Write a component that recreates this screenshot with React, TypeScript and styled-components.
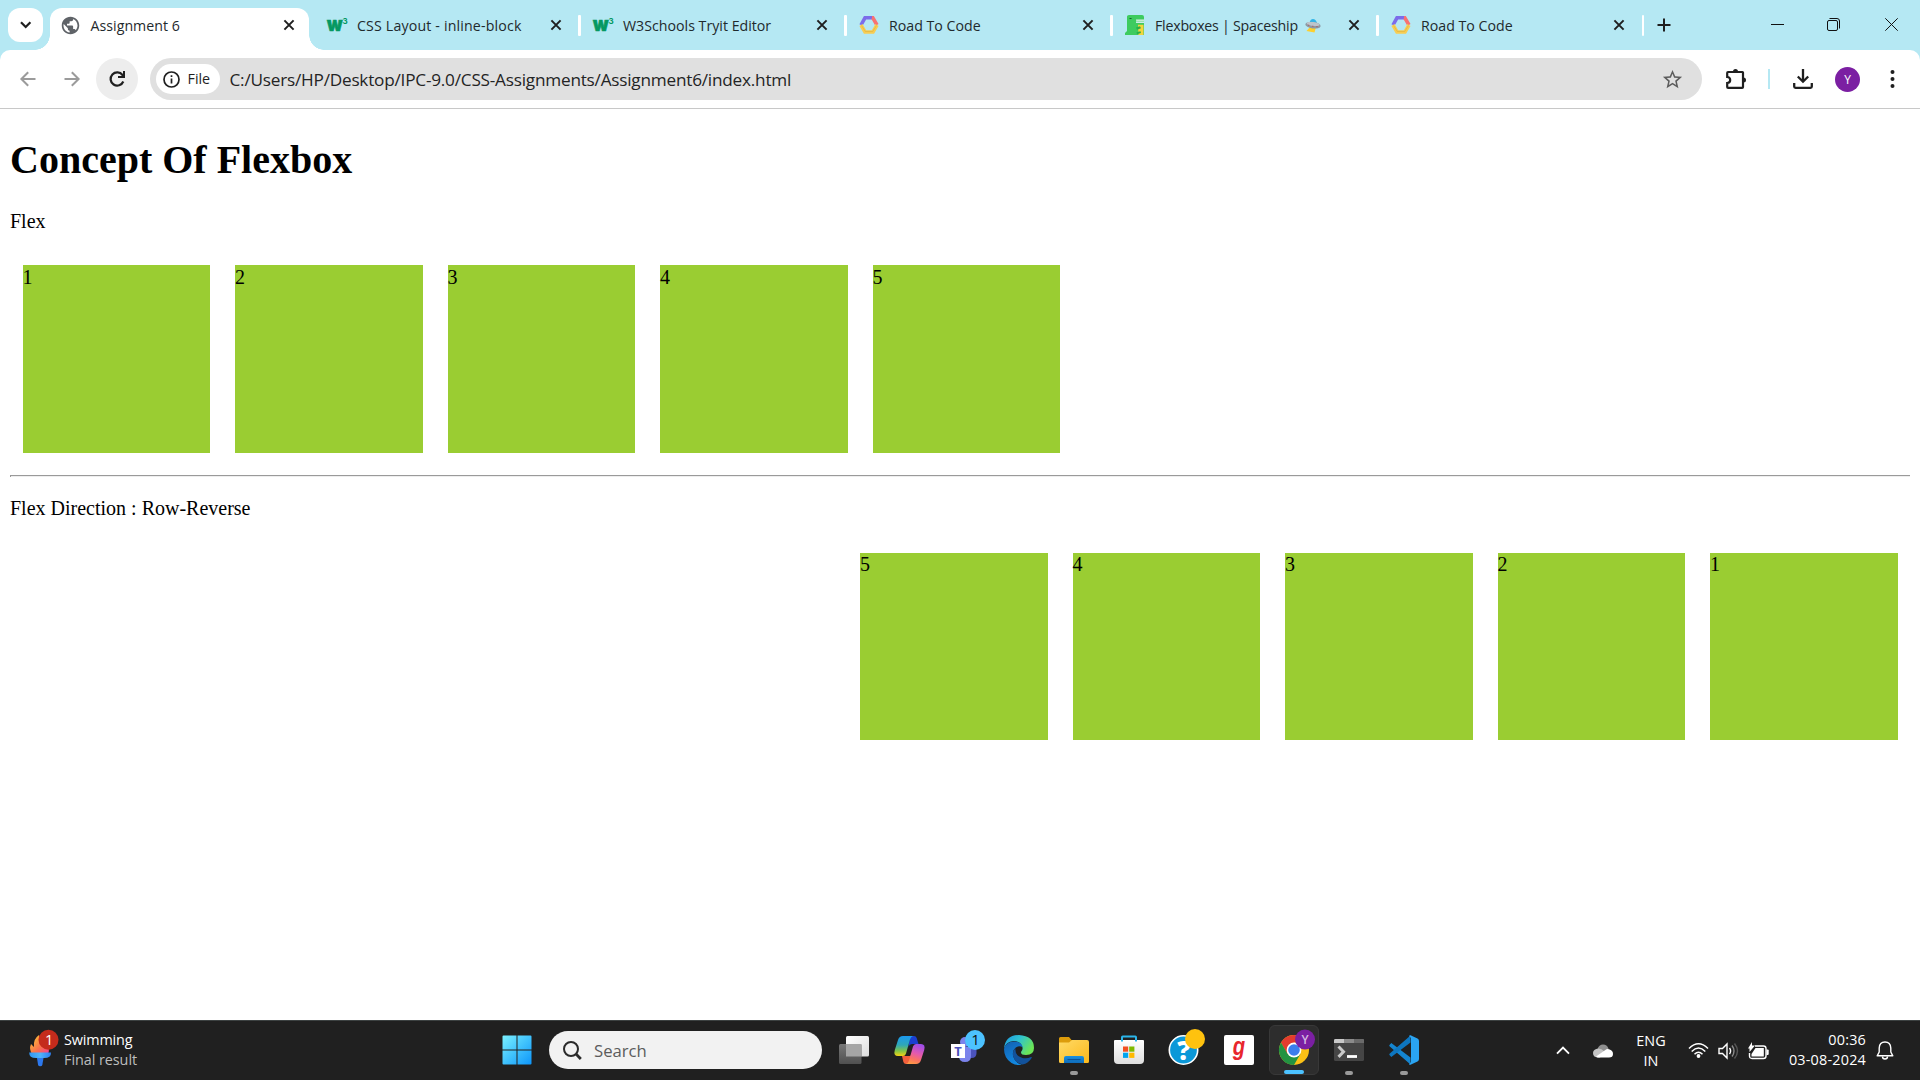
import React from "react";
import styled, { createGlobalStyle, css } from "styled-components";
import { MdPublic, MdStarBorder } from "react-icons/md";

const ui = `"Open Sans", "Noto Sans", sans-serif`;

const Global = createGlobalStyle`
  html, body { margin: 0; padding: 0; background: #fff; }
  * { box-sizing: border-box; }
  svg { display: block; flex: none; overflow: visible; }
`;

const Screen = styled.div`
  width: 1920px;
  height: 1080px;
  display: flex;
  flex-direction: column;
  overflow: hidden;
  background: #fff;
  font-family: ${ui};
`;

/* ---------- tab strip ---------- */

const TabStrip = styled.header`
  height: 50px;
  flex: none;
  display: flex;
  align-items: stretch;
  background: #b5e8f3;
  padding-left: 8px;
`;

const TabSearch = styled.button`
  width: 35px;
  height: 34px;
  margin: 8px 7px 0 0;
  padding: 0;
  border: 0;
  border-radius: 12px;
  background: #fff;
  display: grid;
  place-items: center;
`;

const TabBox = styled.div<{ $active?: boolean; $width: number }>`
  width: ${(p) => p.$width}px;
  flex: none;
  display: flex;
  align-items: center;
  padding-left: 12px;
  ${(p) =>
    p.$active &&
    css`
      position: relative;
      margin: 7.5px 5.5px 0 0;
      padding: 0 14px 7.5px 10.5px;
      background: #fff;
      border-radius: 12px 12px 0 0;
      &::before,
      &::after {
        content: "";
        position: absolute;
        bottom: 0;
        width: 15px;
        height: 15px;
      }
      &::before {
        left: -15px;
        background: radial-gradient(circle at 0 0, transparent 14.5px, #fff 15px);
      }
      &::after {
        right: -15px;
        background: radial-gradient(circle at 100% 0, transparent 14.5px, #fff 15px);
      }
    `}
`;

const TabLabel = styled.span<{ $ls: number }>`
  flex: 1;
  display: flex;
  align-items: center;
  margin-left: 10.5px;
  padding-top: 2px;
  font-size: 14.2px;
  line-height: 20px;
  letter-spacing: ${(p) => p.$ls}px;
  white-space: nowrap;
  color: #1f2a2d;
  svg { margin-left: 7px; }
`;

const TabDivider = styled.i`
  width: 2.5px;
  height: 21px;
  margin-left: 16.5px;
  border-radius: 1px;
  background: #fff;
`;

const NewTab = styled.div`
  display: flex;
  align-items: center;
  margin-left: 12.5px;
  flex: 1;
`;

const WindowButtons = styled.div`
  display: flex;
  align-items: center;
  padding-right: 22px;
  gap: 43px;
  svg { margin-top: -1px; }
  svg:nth-child(2) { margin-right: 2px; }
`;

/* ---------- toolbar ---------- */

const ToolbarBack = styled.div`
  flex: none;
  height: 59px;
  background: #b5e8f3;
`;

const Toolbar = styled.nav`
  height: 59px;
  display: flex;
  align-items: center;
  background: #fff;
  border-radius: 10px 10px 0 0;
  border-bottom: 1px solid #c8c8c8;
  padding: 0 25px 0 20px;
`;

const Reload = styled.div`
  width: 42px;
  height: 42px;
  margin: 0 12px 0 16px;
  border-radius: 50%;
  background: #ededed;
  display: grid;
  place-items: center;
`;

const Omnibox = styled.div`
  width: 1552px;
  flex: none;
  height: 42px;
  border-radius: 21px;
  background: #e0e0e0;
  display: flex;
  align-items: center;
  padding: 0 18px 0 6px;
`;

const FileChip = styled.div`
  width: 64px;
  height: 30px;
  border-radius: 15px;
  background: #fff;
  display: flex;
  align-items: center;
  padding-left: 7px;
  gap: 7.5px;
  font-size: 14.3px;
  font-weight: 500;
  line-height: 20px;
  color: #1f1f1f;
`;

const Url = styled.span`
  flex: 1;
  margin-left: 9.5px;
  padding-top: 1px;
  font-size: 17.2px;
  line-height: 24px;
  letter-spacing: -0.22px;
  color: #242424;
  white-space: nowrap;
`;

const ToolbarTail = styled.div`
  flex: 1;
  display: flex;
  align-items: center;
  padding-left: 23px;
`;

const TailDivider = styled.i`
  width: 2px;
  height: 20px;
  margin: 0 22.5px 0 21px;
  background: #b5e8f3;
`;

const Avatar = styled.span`
  width: 25px;
  height: 25px;
  margin: 0 30px 0 22.5px;
  border-radius: 50%;
  background: #7b1fa2;
  color: #fff;
  font-size: 12px;
  line-height: 25px;
  text-align: center;
`;

/* ---------- document ---------- */

const Page = styled.main`
  flex: 1;
  padding: 0 10px;
  font-family: "Liberation Serif", "Times New Roman", serif;
  font-size: 20px;
  line-height: 23px;
  color: #000;
`;

const Heading = styled.h1`
  margin: 28px 0 26.75px;
  font-size: 40px;
  line-height: 46px;
  font-weight: 700;
`;

const Caption = styled.p`
  margin: 20px 0;
`;

const FlexRow = styled.section<{ $reverse?: boolean }>`
  display: flex;
  flex-direction: ${(p) => (p.$reverse ? "row-reverse" : "row")};
`;

const Square = styled.div`
  width: 187.5px;
  height: 187.5px;
  margin: 12.5px;
  padding-top: 0.5px;
  background: yellowgreen;
`;

const Rule = styled.hr`
  height: 2px;
  margin: 10px 0;
  border: 0;
  border-top: 1px solid #9a9a9a;
  border-left: 1px solid #9a9a9a;
  background: #eee;
`;

/* ---------- taskbar ---------- */

const Taskbar = styled.footer`
  height: 60px;
  flex: none;
  display: flex;
  align-items: stretch;
  background: #202020;
  border-top: 1px solid #3c4141;
  color: #fff;
`;

const Widget = styled.div`
  width: 489.5px;
  display: flex;
  align-items: center;
  padding: 0 0 3px 28px;
`;

const WidgetText = styled.div`
  display: flex;
  flex-direction: column;
  margin-left: 6px;
  padding-top: 1px;
  font-size: 14.4px;
  line-height: 20px;
  span:first-child { letter-spacing: -0.15px; }
  span:last-child { color: #bdbdbd; letter-spacing: -0.05px; }
`;

const Cell = styled.div<{ $active?: boolean }>`
  width: 55px;
  flex: none;
  position: relative;
  display: grid;
  place-items: center;
  padding-bottom: 1px;
  ${(p) =>
    p.$active &&
    css`
      width: 50px;
      height: 50px;
      margin: 4px 2.5px 0;
      padding: 0 0 1px;
      border-radius: 6px;
      border: 1px solid #383838;
      background: #2d2d2d;
    `}
`;

const Indicator = styled.i<{ $active?: boolean }>`
  position: absolute;
  left: 50%;
  bottom: ${(p) => (p.$active ? 0 : 5)}px;
  width: ${(p) => (p.$active ? 20 : 8)}px;
  height: 4px;
  transform: translateX(-50%);
  border-radius: 2px;
  background: ${(p) => (p.$active ? "#4cc2ff" : "#9a9a9a")};
`;

const Search = styled.div`
  width: 273px;
  height: 38px;
  margin: 10px 4.5px 0 4.5px;
  border-radius: 19px;
  background: #f2f2f2;
  display: flex;
  align-items: center;
  padding-left: 14px;
  gap: 12px;
  font-size: 16.7px;
  color: #5c5c5c;
  span { margin-top: 1px; }
`;

const Tray = styled.div`
  flex: 1;
  display: flex;
  align-items: center;
  justify-content: flex-end;
  padding-right: 26px;
  font-size: 14.4px;
  line-height: 20px;
`;

const Language = styled.div`
  width: 30px;
  margin: 0 22px 0 23px;
  text-align: center;
`;

const Status = styled.div`
  display: flex;
  align-items: center;
  gap: 9px;
`;

const Clock = styled.div`
  width: 97px;
  margin: 0 10px 1px 0;
  text-align: right;
  letter-spacing: 0.2px;
`;

/* ---------- small icons ---------- */

const Close = () => (
  <svg width="12" height="12" viewBox="0 0 12 12" stroke="#1f1f1f" strokeWidth="2">
    <path d="M1.4 1.4l9.2 9.2M10.6 1.4l-9.2 9.2" />
  </svg>
);

const W3 = () => (
  <svg width="20" height="20" viewBox="0 0 20 20" fill="#059862" fontFamily="Inter, sans-serif">
    <text x="0" y="15.6" fontSize="20" fontWeight="900" textLength="15.5" lengthAdjust="spacingAndGlyphs" stroke="#059862" strokeWidth=".6">w</text>
    <text x="15.4" y="8.500" fontSize="8" fontWeight="700">3</text>
  </svg>
);

const Hexagon = () => (
  <svg width="20" height="20" viewBox="0 0 20 20" fill="none" strokeWidth="3.6">
    <path d="M2 10L6 2.8H13" stroke="#7c6cea" />
    <path d="M13 2.8h.8L18 10" stroke="#f87272" />
    <path d="M2 10l4 7h8l4-7" stroke="#f8cd52" />
    <path d="M2.5 10.5l3.8 6h7.4l3.8-6" stroke="#dfb544" strokeWidth=".7" />
  </svg>
);

const Dino = () => (
  <svg width="20" height="20" viewBox="0 0 20 20">
    <path d="M2 1.5Q2 0 4 0h13q2 0 2 2v4h-8v3h8v11H0v-2l2-2z" fill="#3ecb5f" />
    <path d="M11 4.500h8v3.300h-7.500z" fill="#d7efe0" />
    <path d="M11 6.3h8" stroke="#7d9" strokeWidth=".8" />
    <path d="M10 8h9v2h-9z" fill="#3ecb5f" />
    <path d="M13 9.800h5.500V20h-5z" fill="#f3d53c" />
    <path d="M11 12.500l4-1.200 1 2-4 1.500zM11.500 17.200l4-1 .5 1.800-4 1.200z" fill="#28b04a" />
    <path d="M4 4q1.600-2 3 0z" fill="#15572a" />
  </svg>
);

const Ufo = () => (
  <svg width="16" height="16" viewBox="0 0 16 16">
    <path d="M5 9h6l-1.5 5.5L1.5 13z" fill="#fcd02f" />
    <path d="M4.5 5Q5.2 1 8 1t4 4z" fill="#32b5e8" />
    <ellipse cx="8" cy="7.2" rx="7.7" ry="3.3" fill="#8d99a3" transform="rotate(7 8 7)" />
    <ellipse cx="8" cy="6" rx="6.5" ry="1.9" fill="#bcc5cc" transform="rotate(7 8 7)" />
    <path d="M3.200 7.200h1M7.200 8.200h1.200M11.500 8.600h1" stroke="#b8525c" strokeWidth="1.100" />
  </svg>
);

const Arrow = ({ flip }: { flip?: boolean }) => (
  <svg width="16" height="16" viewBox="0 0 16 16" fill="none" stroke="#9b9b9b" strokeWidth="2" transform={flip ? "scale(-1 1)" : undefined}>
    <path d="M15.5 8H2M8.2 1.2L1.4 8l6.8 6.8" />
  </svg>
);

const Torch = () => (
  <svg width="30" height="38" viewBox="0 0 30 38">
    <defs>
      <linearGradient id="flame" x1="0" y1="0" x2="1" y2="1">
        <stop offset=".2" stopColor="#fbb03b" />
        <stop offset=".6" stopColor="#fa6e4d" />
        <stop offset="1" stopColor="#f0409a" />
      </linearGradient>
      <linearGradient id="bowl" x1="0" y1="0" x2="1" y2="0">
        <stop offset="0" stopColor="#2f95f5" />
        <stop offset=".5" stopColor="#50b4fa" />
        <stop offset="1" stopColor="#2c7df0" />
      </linearGradient>
    </defs>
    <path d="M4 24Q.8 19 3 14l3 3Q5 9 11 5q1 6 9 10 2 4 0 9z" fill="url(#flame)" />
    <path d="M1.200 22.500h21.800q.3 5.500-6.800 5.500H8q-7 0-6.800-5.500z" fill="url(#bowl)" />
    <path d="M9 28h6.500l-1.200 7q-.3 1.300-2.100 1.300t-2.100-1.300z" fill="#2c78ee" />
    <circle cx="20.500" cy="9.800" r="10" fill="#c42b1c" />
    <text x="21.200" y="15" textAnchor="middle" fontSize="14.500" fontWeight="500" fill="#fff">1</text>
  </svg>
);

const Start = () => (
  <svg width="30" height="30" viewBox="0 0 30 30">
    <linearGradient id="win" gradientUnits="userSpaceOnUse" x1="0" y1="0" x2="30" y2="30">
      <stop offset="0" stopColor="#7df2ff" />
      <stop offset=".5" stopColor="#41c3fd" />
      <stop offset="1" stopColor="#0c94fa" />
    </linearGradient>
    <path d="M1.500.5H14.500V14.500H.5V1.500q0-1 1-1zM15.500.5H28.500q1 0 1 1V14.500H15.500zM.5 15.500H14.500V29.500H1.500q-1 0-1-1zM15.500 15.500H29.500V28.500q0 1-1 1H15.500z" fill="url(#win)" />
  </svg>
);

const TaskView = () => (
  <svg width="30" height="28" viewBox="0 0 30 28">
    <defs>
      <linearGradient id="tv" x1="0" y1="0" x2="1" y2="1">
        <stop stopColor="#fff" />
        <stop offset="1" stopColor="#dcdcdc" />
      </linearGradient>
      <linearGradient id="tv2" x1="0" y1="0" x2="0" y2="1">
        <stop stopColor="#777" />
        <stop offset="1" stopColor="#505050" />
      </linearGradient>
    </defs>
    <rect x="7" y="0" width="23" height="20.500" rx="1.500" fill="url(#tv)" />
    <rect x="0" y="8" width="22.500" height="20" rx="1.500" fill="url(#tv2)" />
    <path d="M7 8h15.500v12.500H7z" fill="#a5a5a5" />
  </svg>
);

const Copilot = () => (
  <svg width="31" height="28" viewBox="0 0 31 28">
    <defs>
      <linearGradient id="cpL" x1="0" y1="0" x2="0" y2="1">
        <stop stopColor="#1b9af0" />
        <stop offset=".45" stopColor="#2fa7b8" />
        <stop offset=".75" stopColor="#82c546" />
        <stop offset="1" stopColor="#f5d313" />
      </linearGradient>
      <linearGradient id="cpR" x1=".6" y1="0" x2=".3" y2="1">
        <stop stopColor="#a04de8" />
        <stop offset=".45" stopColor="#e35aae" />
        <stop offset=".75" stopColor="#fb7262" />
        <stop offset="1" stopColor="#fd9a45" />
      </linearGradient>
    </defs>
    <path d="M16 0h4q2 0 2.700 2l1.800 6h-6q-3 0-4 3z" fill="#1b3fd0" />
    <path d="M8 20h7.500q2 0 2.500-2l2-6q-1 16-6 16h-2q-2 0-2.600-2z" fill="#f2603c" />
    <path d="M9 0h10q-2.200.5-3 3.500l-4 14Q11.300 20 9 20H4Q-.8 20 .8 14L4 4q1.200-4 5-4z" fill="url(#cpL)" />
    <path d="M22 28H12q2.200-.5 3-3.500l4-14Q19.800 8 22 8h5q4.800 0 3.200 6L27 24q-1.200 4-5 4z" fill="url(#cpR)" />
  </svg>
);

const Teams = () => (
  <svg width="35" height="34" viewBox="0 0 35 34">
    <circle cx="15" cy="12" r="5" fill="#7b83eb" />
    <path d="M17 17h9.500v6q0 5-5 5H18z" fill="#4b53bc" />
    <path d="M9 17h12v9q0 6-6 6t-6-6z" fill="#7b83eb" />
    <rect x="1" y="14" width="14" height="14" fill="#fff" />
    <text x="8" y="25.500" textAnchor="middle" fontSize="13" fontWeight="700" fill="#4b53bc">T</text>
    <circle cx="25" cy="10" r="10" fill="#4cc2ff" />
    <text x="25.600" y="15.200" textAnchor="middle" fontSize="15" fill="#111">1</text>
  </svg>
);

const Edge = () => (
  <svg width="30" height="30" viewBox="0 0 30 30">
    <defs>
      <linearGradient id="edT" x1="0" y1="0" x2="1" y2=".5">
        <stop offset=".1" stopColor="#1f9fe0" />
        <stop offset=".5" stopColor="#2fc3cf" />
        <stop offset="1" stopColor="#6be556" />
      </linearGradient>
      <linearGradient id="edL" x1="0" y1="0" x2=".4" y2="1">
        <stop stopColor="#1260b0" />
        <stop offset="1" stopColor="#1288e0" />
      </linearGradient>
    </defs>
    <path d="M0 14Q1 0 15 0q15 1 15 13 0 7-8 7-5 0-5-2.500 0-1 1-2 .8-1 .5-3Q17 6 9.500 6 2 6.500 0 14z" fill="url(#edT)" />
    <path d="M0 14Q2 6.500 10 6.500q7.500 0 8.800 6-3-2.500-7 0-4 3-2.500 9Q11 28 18 29.600 13 31 7.500 28 0 23 0 14z" fill="url(#edL)" />
    <path d="M11.500 13q-4 4-2 9.500 2.500 6 9 7 6-1 9.300-6.700.3-1-.8-.8-4 2-8.500 1-8-2-7-10z" fill="#12529b" />
  </svg>
);

const Folder = () => (
  <svg width="30" height="28" viewBox="0 0 30 28">
    <defs>
      <linearGradient id="fd" x1="0" y1="0" x2="1" y2="1">
        <stop stopColor="#ffda66" />
        <stop offset="1" stopColor="#fcb91c" />
      </linearGradient>
      <linearGradient id="fd2" x1="0" y1="0" x2="0" y2="1">
        <stop stopColor="#1a90e0" />
        <stop offset="1" stopColor="#0f6cba" />
      </linearGradient>
    </defs>
    <path d="M0 6V2.500Q0 1 1.500 1H10l2.500 3H28v4H0z" fill="#dd9c0b" />
    <path d="M0 6.500h10l3-2.500h15q2 0 2 2v19.500q0 1.500-1.500 1.500h-27Q0 27 0 25.500z" fill="url(#fd)" />
    <path d="M5 27v-5q0-2 2-2h16q2 0 2 2v5z" fill="url(#fd2)" />
    <path d="M8.500 23.600h13" stroke="#0a4f94" strokeWidth="1" />
  </svg>
);

const Store = () => (
  <svg width="30" height="30" viewBox="0 0 30 30">
    <linearGradient id="st" x1="0" y1="0" x2="0" y2="1">
      <stop stopColor="#fff" />
      <stop offset="1" stopColor="#dedede" />
    </linearGradient>
    <path d="M1 5h28q1 0 1 1v19q0 4-4 4H4q-4 0-4-4V6q0-1 1-1z" fill="url(#st)" />
    <path d="M8 6.500V2.200Q8 1.500 8.700 1.500h12.600q.7 0 .7.700V6.500" stroke="#2bb5ea" strokeWidth="2" fill="none" />
    <path d="M9 11.500h5.200v5.200H9z" fill="#f25022" />
    <path d="M15.200 11.500h5.200v5.200h-5.200z" fill="#7fba00" />
    <path d="M9 17.700h5.200v5.200H9z" fill="#00a4ef" />
    <path d="M15.200 17.700h5.200v5.200h-5.200z" fill="#ffb900" />
  </svg>
);

const Help = () => (
  <svg width="36" height="36" viewBox="0 0 36 36">
    <circle cx="14.500" cy="21" r="14.200" fill="#0b98d8" stroke="#fff" strokeWidth="1.600" />
    <text x="14.700" y="30.500" textAnchor="middle" fontSize="26" fontWeight="800" fill="#fff">?</text>
    <circle cx="26" cy="10" r="10" fill="#ffc20e" />
  </svg>
);

const GTile = styled.span`
  width: 30px;
  height: 30px;
  border-radius: 2px;
  background: #fff;
  color: #e8262d;
  font: italic 700 26px/23px "Liberation Sans", sans-serif;
  text-align: center;
  span {
    display: inline-block;
    transform: scaleX(0.78);
  }
`;

const Chrome = () => (
  <svg width="36" height="36" viewBox="0 0 36 36">
    <circle cx="15" cy="21" r="15" fill="#fbc116" />
    <path d="M2 13.500A15 15 0 0 1 28 13.500H15L9 26z" fill="#e33b2e" />
    <path d="M2 13.500A15 15 0 0 0 15 36L21.500 24.700H8.500z" fill="#229342" />
    <circle cx="15" cy="21" r="7.400" fill="#fff" />
    <circle cx="15" cy="21" r="5.800" fill="#3b7ded" />
    <circle cx="26" cy="10.500" r="10" fill="#7b1fa2" />
    <text x="26" y="15" textAnchor="middle" fontSize="12" fontWeight="600" fill="#d6b8e2">Y</text>
  </svg>
);

const Terminal = () => (
  <svg width="30" height="22" viewBox="0 0 30 22">
    <rect width="30" height="22" rx="1.500" fill="#454545" />
    <path d="M0 4V1.500Q0 0 1.500 0h27Q30 0 30 1.500V4z" fill="#8b8b8b" />
    <path d="M0 4V1.500Q0 0 1.500 0H10v4z" fill="#c8c8c8" />
    <path d="M20 0h8.500Q30 0 30 1.500V4H20z" fill="#6a6a6a" />
    <path d="M4.500 7.500l5 5.200-5 5.200" stroke="#c9c9c9" strokeWidth="3" fill="none" />
    <path d="M13 17.500h10" stroke="#fff" strokeWidth="2.800" />
  </svg>
);

const VsCode = () => (
  <svg width="30" height="30" viewBox="0 0 30 30">
    <path d="M2.300 8.100L21.500 22.500V29.600L.5 11.200Q0 10.500.5 10z" fill="#1485d0" />
    <path d="M2.300 21.900L21.500 7.500V.4L.5 18.800Q0 19.500.5 20z" fill="#0d76c0" />
    <path d="M21.500.3L28.500 3.600Q30 4.400 30 6v18q0 1.600-1.500 2.400L21.500 29.700Q20.500 30 20 29.200L22 27V3L20 .9Q20.600 0 21.500.3z" fill="#2aa4f2" />
  </svg>
);

const Cloud = () => (
  <svg width="20" height="14" viewBox="0 0 20 14">
    <path d="M4.500 5Q6 .5 10 .5t5.500 4.200l-2 5H4z" fill="#8f8f8f" />
    <path d="M5.500 4.500q3 0 6 3L7 13.500H4.500Q0 13 0 9t5.500-4.500z" fill="#c4c4c4" />
    <path d="M3 12.500L12 6.200q2-1.700 4-1Q20 6.200 20 10q0 3.500-4 3.500H5q-1 0-2-1z" fill="#fff" />
  </svg>
);

const Wifi = () => (
  <svg width="21" height="17" viewBox="0 0 21 17" fill="none" stroke="#fff" strokeWidth="1.500">
    <path d="M1 6.500q9.500-9.500 19 0M3.700 9.500q6.800-6.900 13.600 0M6.500 12.200q4-4 8 0" />
    <circle cx="10.500" cy="14" r="1.900" fill="#fff" stroke="none" />
  </svg>
);

const Volume = () => (
  <svg width="21" height="18" viewBox="0 0 21 18" fill="none" strokeWidth="1.400">
    <path d="M1 6.500h3.500L9 2v14l-4.500-4.500H1z" stroke="#fff" />
    <path d="M11.500 6q2.200 3 0 6" stroke="#fff" />
    <path d="M14 3.500q4 5.500 0 11" stroke="#8a8a8a" />
    <path d="M16.500 1.500q6 7.500 0 15" stroke="#555" />
  </svg>
);

const Battery = () => (
  <svg width="21" height="18" viewBox="0 0 21 18">
    <path d="M7 4h8.500Q18 4 18 6.500V14q0 2.500-2.500 2.500H4Q1.500 16.500 1.500 14V11" fill="none" stroke="#fff" strokeWidth="1.400" />
    <path d="M7.500 6h8.300v8.500H3.500V12z" fill="#fff" />
    <path d="M18.500 7.500h1.200q1 0 1 1V12q0 1-1 1h-1.200z" fill="#fff" />
    <path d="M4 0v3.500h3L1.500 10V6.500H0z" fill="#fff" />
  </svg>
);

const GlobeIcon = styled(MdPublic)`
  width: 21px;
  height: 21px;
  margin: 0 -0.5px 0 -1px;
  color: #5f6368;
`;

/* ---------- data ---------- */

const tabs = [
  { title: "Assignment 6", icon: <GlobeIcon />, active: true, width: 259, ls: 0.02 },
  { title: "CSS Layout - inline-block", icon: <W3 />, width: 266, ls: 0.16 },
  { title: "W3Schools Tryit Editor", icon: <W3 />, width: 266, ls: 0 },
  { title: "Road To Code", icon: <Hexagon />, width: 266, ls: 0 },
  { title: "Flexboxes | Spaceship", icon: <Dino />, width: 266, ls: -0.23, ufo: true },
  { title: "Road To Code", icon: <Hexagon />, width: 265.5, ls: 0 },
];

const apps: { icon: React.ReactNode; running?: boolean; active?: boolean; lift?: boolean }[] = [
  { icon: <TaskView /> },
  { icon: <Copilot /> },
  { icon: <Teams />, lift: true },
  { icon: <Edge /> },
  { icon: <Folder />, running: true },
  { icon: <Store /> },
  { icon: <Help />, lift: true },
  { icon: <GTile><span>g</span></GTile> },
  { icon: <Chrome />, active: true, lift: true },
  { icon: <Terminal />, running: true },
  { icon: <VsCode />, running: true },
];

/* Icons that carry a badge extend up and to the right of the app's own artwork. */
const Badged = styled.div`
  display: flex;
  margin: -6px -6px 0 0;
`;

const numbers = [1, 2, 3, 4, 5];

export default function App() {
  return (
    <Screen>
      <Global />
      <TabStrip>
        <TabSearch>
          <svg width="12" height="8" viewBox="0 0 12 8" fill="none" stroke="#1f1f1f" strokeWidth="2.200">
            <path d="M1 1.200L5.700 6l4.700-4.800" />
          </svg>
        </TabSearch>
        {tabs.map((t, i) => (
          <TabBox key={i} $active={t.active} $width={t.width}>
            {t.icon}
            <TabLabel $ls={t.ls}>
              {t.title}
              {t.ufo && <Ufo />}
            </TabLabel>
            <Close />
            {!t.active && <TabDivider />}
          </TabBox>
        ))}
        <NewTab>
          <svg width="14" height="14" viewBox="0 0 14 14" stroke="#1f1f1f" strokeWidth="2">
            <path d="M7 .5v13M.5 7h13" />
          </svg>
        </NewTab>
        <WindowButtons>
          <svg width="13" height="13" viewBox="0 0 13 13" stroke="#111"><path d="M0 6.500h13" /></svg>
          <svg width="13" height="13" viewBox="0 0 13 13" fill="none" stroke="#111">
            <rect x=".5" y="2.500" width="10" height="10" rx="1.500" />
            <path d="M2.500.5h7.500q2.500 0 2.500 2.500v7.500" />
          </svg>
          <svg width="13" height="13" viewBox="0 0 13 13" stroke="#111"><path d="M.3.3l12.400 12.400M12.700.3L.3 12.700" /></svg>
        </WindowButtons>
      </TabStrip>
      <ToolbarBack>
        <Toolbar>
          <Arrow />
          <svg width="28" height="1" />
          <Arrow flip />
          <Reload>
            <svg width="18" height="18" viewBox="0 0 18 18" fill="none" stroke="#1f1f1f" strokeWidth="2.200">
              <path d="M15.300 11.500A6.600 6.600 0 1 1 14.500 5L16 6.600" />
              <path d="M16 1v6h-6" strokeWidth="2" />
            </svg>
          </Reload>
          <Omnibox>
            <FileChip>
              <svg width="17" height="17" viewBox="0 0 17 17" fill="none" stroke="#1f1f1f" strokeWidth="1.700">
                <circle cx="8.500" cy="8.500" r="7.500" />
                <path d="M8.500 7.600v5M8.500 4.300V6" />
              </svg>
              File
            </FileChip>
            <Url>C:/Users/HP/Desktop/IPC-9.0/CSS-Assignments/Assignment6/index.html</Url>
            <MdStarBorder size={23} color="#5c5c5c" />
          </Omnibox>
          <ToolbarTail>
            <svg width="22" height="22" viewBox="0 0 22 22">
              <path d="M3 4h14.500q.5 0 .5.500V19q0 .9-.9.900H3.100q-.9 0-.9-.9v-4q3-.2 3-3t-3-3V4.900Q2.200 4 3 4z" fill="none" stroke="#1f1f1f" strokeWidth="2.200" />
              <path d="M8 3.500a2.500 2.500 0 0 1 5 0zM18.500 9.500a2.500 2.500 0 0 1 0 5z" fill="#1f1f1f" />
            </svg>
            <TailDivider />
            <svg width="20" height="20" viewBox="0 0 20 20" fill="none" stroke="#1f1f1f" strokeWidth="2.300">
              <path d="M10 0v12M4.800 7.500L10 12.700l5.200-5.200M1.200 14v3.500q0 1.300 1.300 1.300h15q1.300 0 1.300-1.300V14" />
            </svg>
            <Avatar>Y</Avatar>
            <svg width="5" height="18" viewBox="0 0 5 18" fill="#1f1f1f">
              <circle cx="2.500" cy="2" r="2" /><circle cx="2.500" cy="9" r="2" /><circle cx="2.500" cy="16" r="2" />
            </svg>
          </ToolbarTail>
        </Toolbar>
      </ToolbarBack>

      <Page>
        <Heading>Concept Of Flexbox</Heading>
        <Caption>Flex</Caption>
        <FlexRow>{numbers.map((n) => <Square key={n}>{n}</Square>)}</FlexRow>
        <Rule />
        <Caption>Flex Direction : Row-Reverse</Caption>
        <FlexRow $reverse>{numbers.map((n) => <Square key={n}>{n}</Square>)}</FlexRow>
      </Page>

      <Taskbar>
        <Widget>
          <Torch />
          <WidgetText>
            <span>Swimming</span>
            <span>Final result</span>
          </WidgetText>
        </Widget>
        <Cell><Start /></Cell>
        <Search>
          <svg width="19" height="19" viewBox="0 0 19 19" fill="none" stroke="#2b2b2b" strokeWidth="2">
            <circle cx="8" cy="8" r="7" />
            <path d="M12.800 12.800l5 5.200" strokeWidth="2.800" />
          </svg>
          <span>Search</span>
        </Search>
        {apps.map((a, i) => (
          <Cell key={i} $active={a.active}>
            {a.lift ? <Badged>{a.icon}</Badged> : a.icon}
            {(a.running || a.active) && <Indicator $active={a.active} />}
          </Cell>
        ))}
        <Tray>
          <svg width="14" height="9" viewBox="0 0 14 9" fill="none" stroke="#fff" strokeWidth="1.900">
            <path d="M1 7.700L7 1.700l6 6" />
          </svg>
          <svg width="23" height="1" />
          <Cloud />
          <Language>ENG IN</Language>
          <Status><Wifi /><Volume /><Battery /></Status>
          <Clock>00:36<br />03-08-2024</Clock>
          <svg width="18" height="19" viewBox="0 0 18 19" fill="none" stroke="#fff" strokeWidth="1.400">
            <path d="M9 1Q3.500 1 3.200 7v4L1.200 14.800h15.600L14.800 11V7Q14.500 1 9 1z" strokeLinejoin="round" />
            <path d="M6.500 15.500q0 2.500 2.500 2.500t2.500-2.500" />
          </svg>
        </Tray>
      </Taskbar>
    </Screen>
  );
}
